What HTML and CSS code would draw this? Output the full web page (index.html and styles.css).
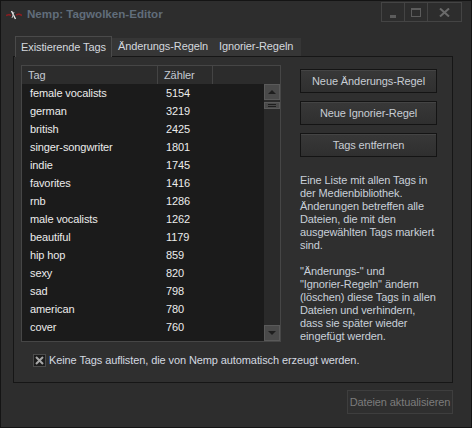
FILE: index.html
```html
<!DOCTYPE html>
<html lang="de">
<head>
<meta charset="utf-8">
<title>Nemp: Tagwolken-Editor</title>
<link rel="stylesheet" href="styles.css">
</head>
<body>
<div class="window">
  <div class="titlebar">
    <svg class="appicon" width="16" height="10" viewBox="0 0 16 10">
      <path d="M0 5.5 L3 4.5 L5 5.5" stroke="#8a1e22" stroke-width="1.6" fill="none"/>
      <path d="M10 5 L13 4 L16 5.5" stroke="#8a1e22" stroke-width="1.6" fill="none"/>
      <path d="M5.5 1 L9.5 9" stroke="#e8e8e8" stroke-width="1.4"/>
      <path d="M8 2 L6 8" stroke="#bbbbbb" stroke-width="1"/>
    </svg>
    <span class="title">Nemp: Tagwolken-Editor</span>
    <div class="caption">
      <div class="cbtn"><span class="g-min"></span></div>
      <div class="cbtn"><span class="g-max"></span></div>
      <div class="cbtn close">
        <svg width="11" height="9" viewBox="0 0 11 9"><path d="M1 0.5 L10 8.5 M10 0.5 L1 8.5" stroke="#6a6a6a" stroke-width="2"/></svg>
      </div>
    </div>
  </div>

  <div class="tabs">
    <div class="tab active">Existierende Tags</div>
    <div class="tab tab-2">Änderungs-Regeln</div>
    <div class="tab tab-3">Ignorier-Regeln</div>
  </div>

  <div class="panel">
    <div class="panel-main">
      <div class="list">
        <div class="list-head">
          <div class="h-cell h-tag">Tag</div>
          <div class="h-cell h-count">Zähler</div>
          <div class="h-rest"></div>
        </div>
        <div class="list-body">
          <div class="rows">
            <div class="row"><span class="c-tag">female vocalists</span><span class="c-num">5154</span></div>
            <div class="row"><span class="c-tag">german</span><span class="c-num">3219</span></div>
            <div class="row"><span class="c-tag">british</span><span class="c-num">2425</span></div>
            <div class="row"><span class="c-tag">singer-songwriter</span><span class="c-num">1801</span></div>
            <div class="row"><span class="c-tag">indie</span><span class="c-num">1745</span></div>
            <div class="row"><span class="c-tag">favorites</span><span class="c-num">1416</span></div>
            <div class="row"><span class="c-tag">rnb</span><span class="c-num">1286</span></div>
            <div class="row"><span class="c-tag">male vocalists</span><span class="c-num">1262</span></div>
            <div class="row"><span class="c-tag">beautiful</span><span class="c-num">1179</span></div>
            <div class="row"><span class="c-tag">hip hop</span><span class="c-num">859</span></div>
            <div class="row"><span class="c-tag">sexy</span><span class="c-num">820</span></div>
            <div class="row"><span class="c-tag">sad</span><span class="c-num">798</span></div>
            <div class="row"><span class="c-tag">american</span><span class="c-num">780</span></div>
            <div class="row"><span class="c-tag">cover</span><span class="c-num">760</span></div>
            <div class="row"><span class="c-tag">ballad</span><span class="c-num">744</span></div>
          </div>
          <div class="scrollbar">
            <div class="sb-btn"><span class="arr-up"></span></div>
            <div class="sb-thumb"><span></span><span></span></div>
            <div class="sb-track"></div>
            <div class="sb-btn"><span class="arr-down"></span></div>
          </div>
        </div>
      </div>

      <div class="side">
        <button class="btn">Neue Änderungs-Regel</button>
        <button class="btn">Neue Ignorier-Regel</button>
        <button class="btn">Tags entfernen</button>
        <div class="desc">
          <p>Eine Liste mit allen Tags in<br>der Medienbibliothek.<br>Änderungen betreffen alle<br>Dateien, die mit den<br>ausgewählten Tags markiert<br>sind.</p>
          <p>"Änderungs-" und<br>"Ignorier-Regeln" ändern<br>(löschen) diese Tags in allen<br>Dateien und verhindern,<br>dass sie später wieder<br>eingefügt werden.</p>
        </div>
      </div>
    </div>

    <div class="check">
      <span class="box">
        <svg width="9" height="9" viewBox="0 0 9 9"><path d="M1 1 L8 8 M8 1 L1 8" stroke="#a8a8a8" stroke-width="2"/></svg>
      </span>
      <span class="check-label">Keine Tags auflisten, die von Nemp automatisch erzeugt werden.</span>
    </div>
  </div>

  <div class="footer">
    <button class="btn btn-disabled" disabled>Dateien aktualisieren</button>
  </div>
</div>
</body>
</html>
```

FILE: styles.css
```css
* { box-sizing: border-box; }

html, body {
  margin: 0;
  padding: 0;
  background: #2d2d2d;
}

body {
  font-family: "Liberation Sans", Arial, sans-serif;
  font-size: 11px;
  color: #e6e6e6;
  letter-spacing: -0.1px;
}

.window {
  width: 472px;
  height: 428px;
  background: #2d2d2d;
  border: 1px solid #141414;
  display: flex;
  flex-direction: column;
}

/* title bar */
.titlebar {
  height: 35px;
  display: flex;
  align-items: flex-start;
  flex: none;
}

.appicon {
  margin: 9px 0 0 5px;
  flex: none;
}

.title {
  margin: 5px 0 0 5px;
  font-weight: bold;
  font-size: 11.6px;
  letter-spacing: 0;
  color: #616d7b;
  line-height: 16px;
}

.caption {
  margin: 1px 9px 0 auto;
  display: flex;
  border: 1px solid #444444;
  height: 20px;
}

.cbtn {
  height: 18px;
  display: flex;
  align-items: center;
  justify-content: center;
  border-left: 1px solid #444444;
}
.cbtn:first-child { border-left: none; width: 22px; }
.cbtn:nth-child(2) { width: 23px; }
.cbtn.close { width: 34px; }

.g-min {
  width: 6px;
  height: 3px;
  background: #5c5c5c;
  margin-top: 8px;
}
.g-max {
  width: 10px;
  height: 9px;
  border: 1px solid #5c5c5c;
  border-top-width: 2px;
}

/* tabs */
.tabs {
  display: flex;
  align-items: flex-end;
  padding-left: 14px;
  height: 21px;
  margin-bottom: -1px;
  position: relative;
  z-index: 1;
  flex: none;
}

.tab {
  height: 18px;
  line-height: 17px;
  padding: 0 0 0 6px;
  background: #363636;
  color: #d4d8de;
  margin-bottom: 1px;
  white-space: nowrap;
  overflow: hidden;
}
.tab-2 { width: 101px; }
.tab-3 { width: 88px; }

.tab.active {
  height: 21px;
  line-height: 20px;
  background: #303030;
  border: 1px solid #4a4a4a;
  border-bottom: none;
  padding: 0 5px;
  margin-bottom: 0;
}

/* panel */
.panel {
  margin-left: 12px;
  width: 440px;
  height: 327px;
  border: 1px solid #161616;
  background: #2f2f2f;
  padding: 8px 14px 0 7px;
  display: flex;
  flex-direction: column;
  flex: none;
}

.panel-main {
  display: flex;
  align-items: flex-start;
  height: 277px;
  flex: none;
}

/* list */
.list {
  width: 260px;
  height: 277px;
  border: 1px solid #464646;
  background: #1b1b1b;
  display: flex;
  flex-direction: column;
  overflow: hidden;
  flex: none;
}

.list-head {
  height: 18px;
  display: flex;
  background: #2c2c2c;
  flex: none;
}

.h-cell {
  line-height: 18px;
  padding-left: 6px;
  color: #c4cad2;
  border-right: 1px solid #444444;
}
.h-tag { width: 136px; }
.h-count { width: 55px; }
.h-rest { flex: 1; }

.list-body {
  flex: 1;
  display: flex;
  overflow: hidden;
}

.rows {
  flex: 1;
  overflow: hidden;
}

.row {
  height: 18px;
  line-height: 18px;
  display: grid;
  grid-template-columns: 144px 1fr;
  color: #ececec;
}
.c-tag { padding-left: 8px; white-space: nowrap; }

.scrollbar {
  width: 16px;
  display: flex;
  flex-direction: column;
  background: #2a2a2a;
  flex: none;
}

.sb-btn {
  height: 16px;
  background: #4a4a4a;
  border: 1px solid #5a5a5a;
  display: flex;
  align-items: center;
  justify-content: center;
  flex: none;
}

.arr-up, .arr-down {
  width: 0;
  height: 0;
  border-left: 4px solid transparent;
  border-right: 4px solid transparent;
}
.arr-up { border-bottom: 4px solid #1e1e1e; }
.arr-down { border-top: 4px solid #1e1e1e; }

.sb-thumb {
  height: 7px;
  margin-top: 2px;
  background: #4a4a4a;
  border: 1px solid #5a5a5a;
  display: flex;
  flex-direction: column;
  justify-content: center;
  gap: 1px;
  padding: 0 3px;
  flex: none;
}
.sb-thumb span {
  height: 1px;
  background: #1e1e1e;
}

.sb-track { flex: 1; }

/* side column */
.side {
  margin-left: 19px;
  width: 137px;
  padding-top: 4px;
  display: flex;
  flex-direction: column;
  gap: 8px;
}

.btn {
  font-family: "Liberation Sans", Arial, sans-serif;
  font-size: 11px;
  letter-spacing: -0.1px;
  height: 24px;
  padding: 0;
  background: linear-gradient(#383838, #2f2f2f);
  border: 1px solid #141414;
  box-shadow: inset 0 1px 0 #444444;
  color: #c8cdd4;
}

.desc {
  margin-top: 9px;
  color: #c9d0d9;
  line-height: 13px;
  white-space: nowrap;
}
.desc p { margin: 0 0 13px 0; }
.desc p:last-child { margin-bottom: 0; }

/* checkbox */
.check {
  margin-top: 12px;
  margin-left: 12px;
  display: flex;
  align-items: center;
  gap: 3px;
}

.box {
  width: 13px;
  height: 13px;
  background: #1c1c1c;
  border: 1px solid #4c4c4c;
  display: flex;
  align-items: center;
  justify-content: center;
}

.check-label {
  color: #d4d9e0;
  line-height: 13px;
}

/* footer */
.footer {
  display: flex;
  justify-content: flex-end;
  padding: 7px 18px 0 0;
}

.btn-disabled {
  width: 106px;
  height: 24px;
  background: #2f2f2f;
  border: 1px solid #3e3e3e;
  box-shadow: none;
  color: #7c7c7c;
}
```
